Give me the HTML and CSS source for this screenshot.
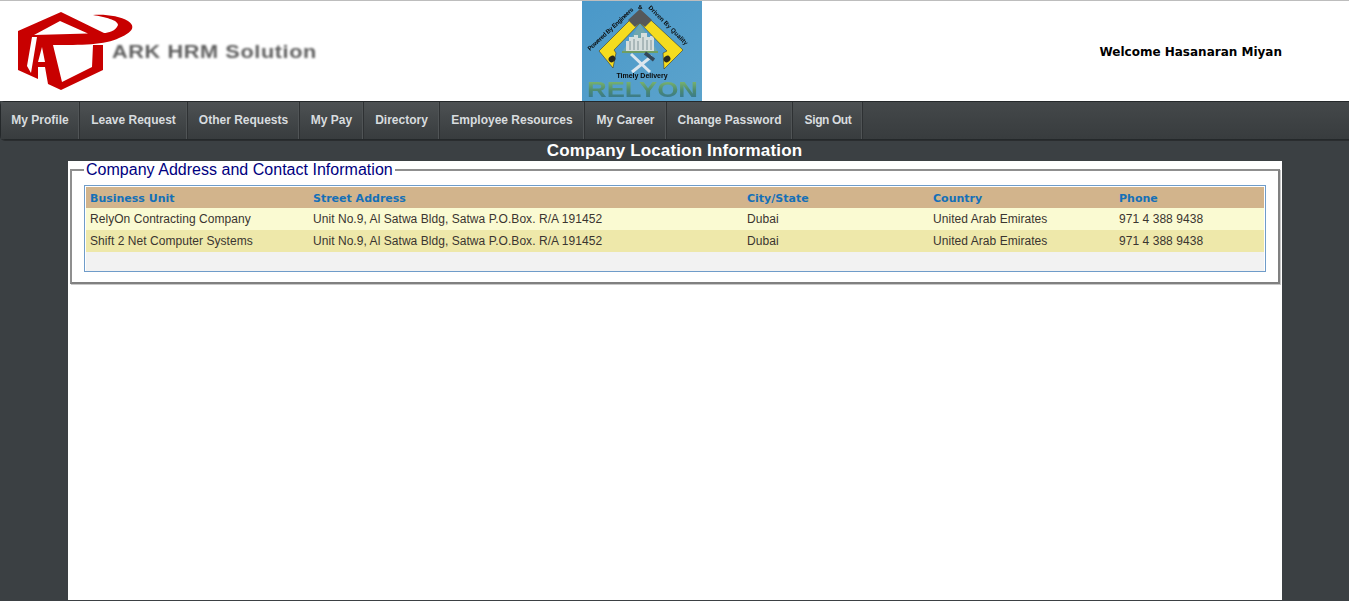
FILE: index.html
```html
<!DOCTYPE html>
<html lang="en">
<head>
<meta charset="utf-8">
<title>Company Location Information</title>
<link rel="stylesheet" href="styles.css">
</head>
<body>
<header class="top">
  <div class="brand">
    <svg class="brand-mark" viewBox="15 8 97 86" width="97" height="86" aria-hidden="true">
      <path class="mark-red" fill-rule="evenodd" d="M61 12 L18 31 V70 L38 79 V67 H45 L48 84 L61 90 L103 70 V45 H93 L92 67 L62 82 L53 45 C80 45 106 45 119 38 C131 33 137 27 128 21 C120 16 105 14 93 15 C105 17 118 20 118 25 C116 31 108 33 104 33 Z M60 21 L88 33.5 L34 35 Z M32 37 H37 L31 73 L27 66 Z M42 47 L45 62 H38 Z"/>
    </svg>
    <span class="brand-name">ARK HRM Solution</span>
  </div>
  <div class="relyon">
    <svg class="relyon-art" viewBox="582 1 120 100" width="120" height="100" aria-label="RelyOn logo">
      <defs>
        <linearGradient id="sky" x1="0" y1="0" x2="1" y2="1">
          <stop offset="0" stop-color="#4a98c9"/><stop offset="1" stop-color="#5ba3cc"/>
        </linearGradient>
        <linearGradient id="word" x1="0" y1="0" x2="0" y2="1">
          <stop offset="0" stop-color="#8fc76c"/><stop offset="0.55" stop-color="#4c8a72"/><stop offset="1" stop-color="#2c6fa0"/>
        </linearGradient>
      </defs>
      <rect x="582" y="1" width="120" height="100" fill="url(#sky)"/>
      <path class="rl-lawn" d="M640 24 L658 52 H622 Z"/>
      <path class="rl-base" d="M622 51 H658 V53 H622 Z"/>
      <path class="rl-city" d="M626 51 V41 H629 V37 H634 V35 H638 V38 H641 V33 H647 V37 H650 V36 H654 V51 Z"/>
      <path class="rl-windows" d="M630 41 V50 M634 39 V50 M638 41 V50 M643 37 V50 M647 40 V50 M651 40 V50"/>
      <path class="rl-yellow" d="M640 10 L683 50 L664 69 L663 53 L667 51 L640 23 L614 50 L616 53 L613 68 L599 51 Z"/>
      <path class="rl-grey" d="M640 9 L652 20 L645 27 L640 23 L635 27 L628 20 Z"/>
      <g class="rl-slot">
        <ellipse cx="612" cy="59" rx="3.6" ry="3" transform="rotate(-35 612 59)"/>
        <ellipse cx="667" cy="59" rx="3.6" ry="3" transform="rotate(-35 667 59)"/>
      </g>
      <path class="rl-tool" d="M631 54 L650 72 M652 56 L632 72"/>
      <path class="rl-hammer" d="M645 53 L654 60"/>
      <text class="rl-small" transform="translate(590 51) rotate(-43)" textLength="60">Powered By Engineers</text>
      <text class="rl-small" x="638" y="9">&amp;</text>
      <text class="rl-small" transform="translate(648 8) rotate(45)" textLength="53">Driven By Quality</text>
      <text class="rl-timely" x="642" y="78">Timely Delivery</text>
      <text class="rl-word" x="587" y="97" textLength="111" lengthAdjust="spacingAndGlyphs" fill="url(#word)">RELYON</text>
    </svg>
  </div>
  <div class="welcome">Welcome Hasanaran Miyan</div>
</header>

<nav class="menu">
  <a class="menu-item" href="#">My Profile</a>
  <a class="menu-item" href="#">Leave Request</a>
  <a class="menu-item" href="#">Other Requests</a>
  <a class="menu-item" href="#">My Pay</a>
  <a class="menu-item" href="#">Directory</a>
  <a class="menu-item" href="#">Employee Resources</a>
  <a class="menu-item" href="#">My Career</a>
  <a class="menu-item" href="#">Change Password</a>
  <a class="menu-item" href="#">Sign Out</a>
</nav>

<h1 class="page-title">Company Location Information</h1>

<main class="panel">
  <fieldset class="box">
    <legend class="box-title">Company Address and Contact Information</legend>
    <div class="grid-wrap">
      <table class="grid">
        <colgroup>
          <col class="c-unit"><col class="c-street"><col class="c-city"><col class="c-country"><col class="c-phone">
        </colgroup>
        <thead>
          <tr><th>Business Unit</th><th>Street Address</th><th>City/State</th><th>Country</th><th>Phone</th></tr>
        </thead>
        <tbody>
          <tr class="odd"><td>RelyOn Contracting Company</td><td>Unit No.9, Al Satwa Bldg, Satwa P.O.Box. R/A 191452</td><td>Dubai</td><td>United Arab Emirates</td><td>971 4 388 9438</td></tr>
          <tr class="even"><td>Shift 2 Net Computer Systems</td><td>Unit No.9, Al Satwa Bldg, Satwa P.O.Box. R/A 191452</td><td>Dubai</td><td>United Arab Emirates</td><td>971 4 388 9438</td></tr>
        </tbody>
      </table>
      <div class="grid-foot"></div>
    </div>
  </fieldset>
</main>
</body>
</html>
```
FILE: styles.css
```css
* { box-sizing: border-box; }
html, body { margin: 0; height: 601px; overflow: hidden; }
body {
  background: #3b4043;
  font-family: "Liberation Sans", Arial, sans-serif;
  display: flex;
  flex-direction: column;
}
.top {
  height: 101px;
  flex: none;
  background: #fff;
  border-top: 1px solid #bdbdbd;
  display: grid;
  grid-template-columns: 582px 120px 1fr;
}
.brand { display: flex; align-items: flex-start; padding: 7px 0 0 15px; }
.brand-mark { display: block; flex: none; overflow: visible; filter: blur(0.3px); }
.mark-red { fill: #c80000; }
.brand-name {
  margin: 33px 0 0 0;
  font-size: 19px;
  font-weight: bold;
  letter-spacing: 0.55px;
  color: #5e5e5e;
  white-space: nowrap;
  filter: blur(0.8px);
  transform: scaleX(1.14);
  transform-origin: left center;
}
.relyon-art { display: block; filter: blur(0.45px); }
.rl-yellow { fill: #f5dc1e; stroke: #222; stroke-width: 0.5; }
.rl-grey { fill: #55585a; }
.rl-slot { fill: #2a2a20; }
.rl-lawn { fill: #6fa6ae; }
.rl-base { fill: #6f9e62; }
.rl-city { fill: #d5dedd; }
.rl-windows { stroke: #7f9296; stroke-width: 1; fill: none; }
.rl-tool { stroke: #dbe6ee; stroke-width: 3; fill: none; }
.rl-hammer { stroke: #33475a; stroke-width: 3.5; fill: none; }
.rl-small, .rl-timely { font-family: "Liberation Sans", sans-serif; font-weight: bold; fill: #0a0a0a; }
.rl-small { font-size: 6.2px; }
.rl-timely { font-size: 7px; text-anchor: middle; }
.rl-word { font-family: "Liberation Sans", sans-serif; font-size: 22px; font-weight: bold; }
.welcome {
  justify-self: end;
  align-self: center;
  margin: 0 67px 0 0;
  padding-top: 2px;
  font-family: "DejaVu Sans", Verdana, sans-serif;
  font-size: 12px;
  font-weight: bold;
  color: #000;
}
.menu {
  height: 39px;
  flex: none;
  display: flex;
  background: linear-gradient(#44484a, #383c3e);
  border: 1px solid #24282a;
  border-right: 0;
  border-radius: 5px 0 0 5px;
  box-shadow: 0 1px 0 #2a2d2f;
}
.menu-item {
  flex: none;
  text-align: center;
  line-height: 37px;
  font-size: 12px;
  font-weight: bold;
  color: #d8dcdf;
  text-decoration: none;
  white-space: nowrap;
  background: linear-gradient(#4d5153, #383c3e);
  border-right: 1px solid #2e3133;
  box-shadow: inset -1px 0 0 #505456;
}
.menu-item:nth-child(1) { width: 79px; }
.menu-item:nth-child(2) { width: 108px; }
.menu-item:nth-child(3) { width: 112px; }
.menu-item:nth-child(4) { width: 64px; }
.menu-item:nth-child(5) { width: 76px; }
.menu-item:nth-child(6) { width: 145px; }
.menu-item:nth-child(7) { width: 82px; }
.menu-item:nth-child(8) { width: 126px; }
.menu-item:nth-child(9) { width: 70px; padding-left: 1px; letter-spacing: -0.4px; }
.page-title {
  margin: 0;
  height: 21px;
  flex: none;
  text-align: center;
  font-size: 17px;
  letter-spacing: 0.15px;
  line-height: 21px;
  font-weight: bold;
  color: #fff;
}
.panel {
  width: 1214px;
  height: 439px;
  flex: none;
  margin-left: 68px;
  background: #fff;
  padding: 0 2px;
}
.box {
  margin: 0;
  padding: 6px 12px 10px;
  height: 123px;
  border: 2px solid #8f8f8f;
  border-right-color: #808080;
  border-bottom-color: #808080;
  box-shadow: 1px 1px 0 #c8c8c8;
}
.box-title {
  margin-left: 0;
  padding: 0 2px;
  font-size: 16px;
  letter-spacing: 0.02px;
  line-height: 18px;
  color: #000080;
}
.grid-wrap {
  height: 87px;
  padding: 1px 1px 0;
  border: 1px solid #6f9cc9;
  background: #fff;
}
.grid {
  width: 100%;
  border-collapse: collapse;
  table-layout: fixed;
}
.c-unit { width: 222px; }
.c-street { width: 434px; }
.c-city { width: 186px; }
.c-country { width: 186px; }
.grid th {
  height: 21px;
  padding: 2px 5px 0;
  background: #d2b48c;
  text-align: left;
  font-family: "DejaVu Sans", Verdana, sans-serif;
  font-size: 11px;
  font-weight: bold;
  color: #1570b8;
}
.grid td {
  height: 22px;
  padding: 0 5px;
  font-size: 12px;
  letter-spacing: 0.05px;
  color: #3a3530;
  white-space: nowrap;
}
.grid th:first-child, .grid td:first-child { padding-left: 4px; }
.odd { background: #fafad2; }
.even { background: #eee8aa; }
.grid-foot { height: 19px; background: #f2f2f2; }
```
